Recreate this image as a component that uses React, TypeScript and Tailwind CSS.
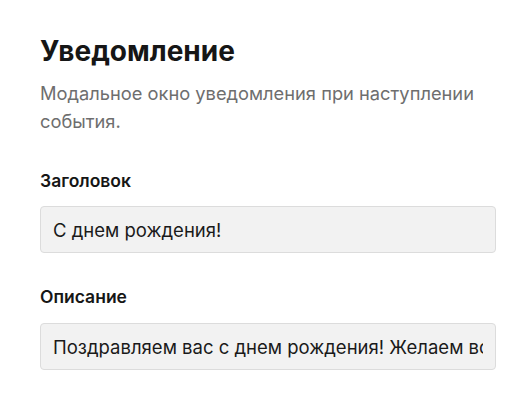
export default function App() {
  const font = { fontFamily: 'Inter, "Liberation Sans", Arial, sans-serif' };
  return (
    <div className="w-[531px] h-[412px] bg-white px-10 pt-[35px]" style={font}>
      <h1 className="text-[28px] leading-[32px] font-bold text-[#161616]">Уведомление</h1>
      <p className="mt-[12px] text-[18.3px] leading-[28px] text-[#6e6e6e]">
        Модальное окно уведомления при наступлении события.
      </p>
      <div className="mt-[36px] flex flex-col">
        <label className="text-[17.5px] leading-[20px] font-semibold text-[#161616]">Заголовок</label>
        <input
          readOnly
          value="С днем рождения!"
          className="mt-[15px] w-[456px] h-[47px] rounded-[4px] border border-[#dcdcdc] bg-[#f2f2f2] px-3 text-[18.5px] text-[#1a1a1a] outline-none"
          style={font}
        />
        <label className="mt-[34px] text-[17.5px] leading-[20px] font-semibold text-[#161616]">Описание</label>
        <input
          readOnly
          value="Поздравляем вас с днем рождения! Желаем всего наилучшего!"
          className="mt-[16px] w-[456px] h-[47px] rounded-[4px] border border-[#dcdcdc] bg-[#f2f2f2] px-3 text-[18.5px] text-[#1a1a1a] outline-none"
          style={font}
        />
      </div>
    </div>
  );
}
